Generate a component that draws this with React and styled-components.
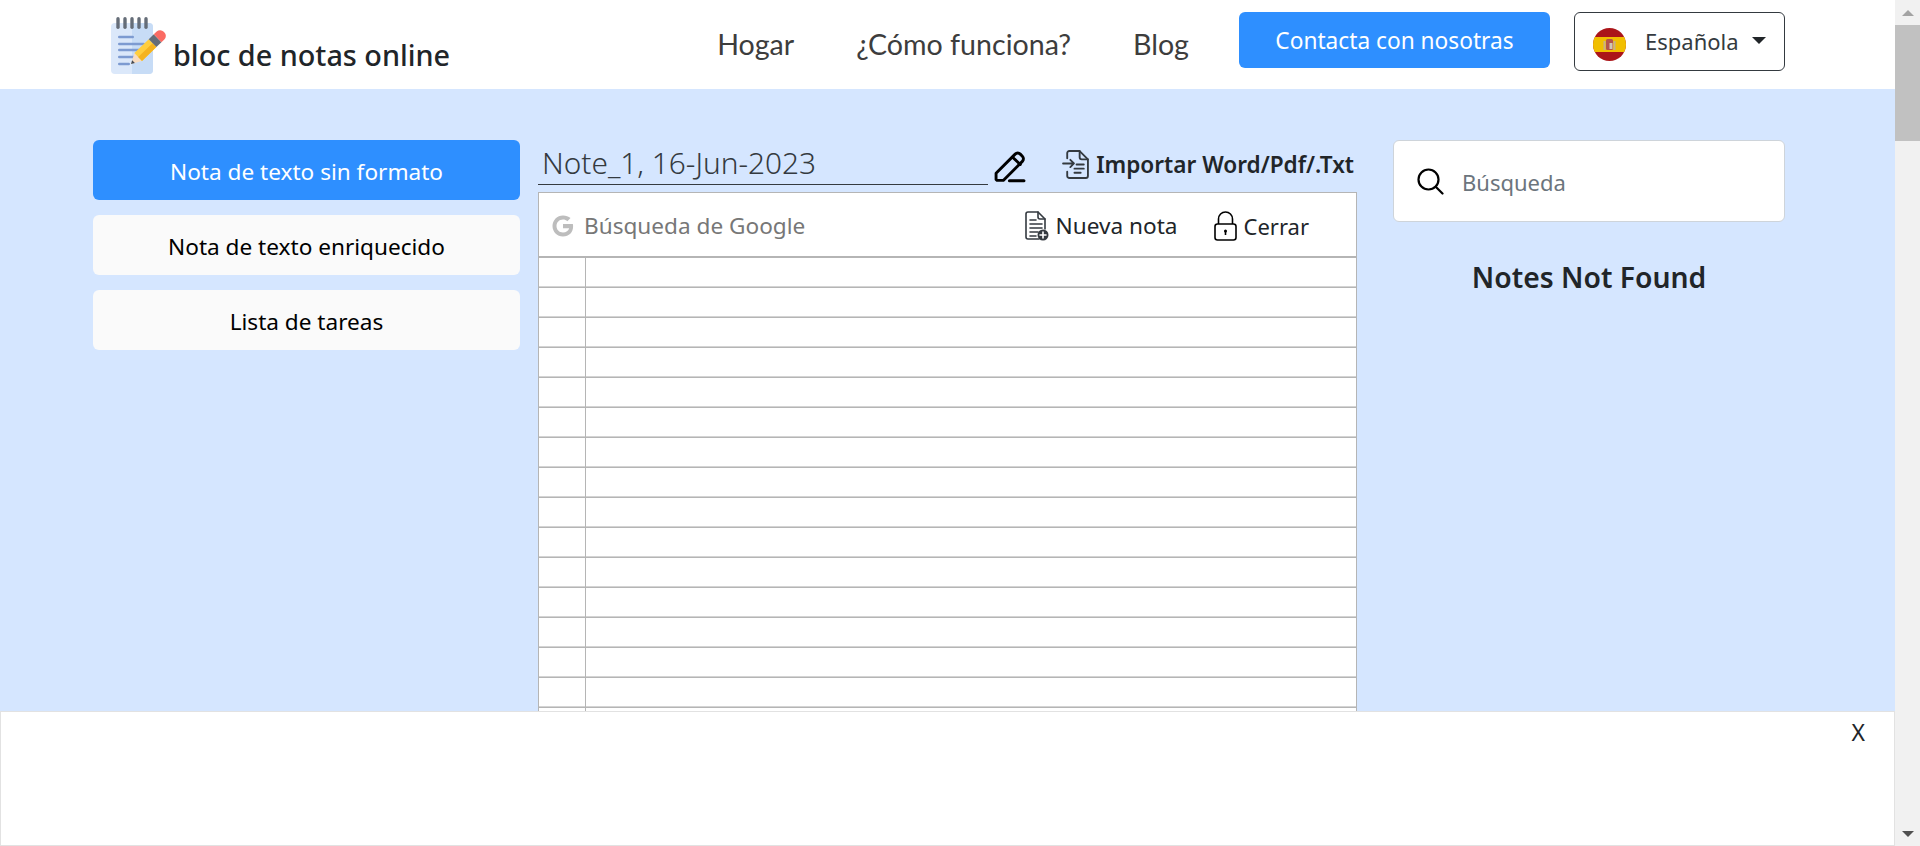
import styled, { createGlobalStyle } from "styled-components";

const GlobalStyle = createGlobalStyle`
  html, body {
    margin: 0;
    height: 100%;
    overflow: hidden;
  }
  body {
    font-family: "Noto Sans", "Open Sans", sans-serif;
    color: #212529;
    background: #d5e6ff;
  }
  * { box-sizing: border-box; }
`;

const Shell = styled.div`
  display: flex;
  height: 100vh;
`;

const Main = styled.div`
  flex: 1;
  min-width: 0;
  position: relative;
  overflow: hidden;
  display: flex;
  flex-direction: column;
`;

const Header = styled.header`
  height: 89px;
  flex: none;
  background: #fff;
  display: flex;
  padding: 12px 110px 0 111px;
`;

const Brand = styled.a`
  display: flex;
  align-items: flex-end;
  height: 61px;
  font-size: 28.8px;
  font-weight: 500;
  line-height: 36px;
  margin-top: 2px;
  white-space: nowrap;
  svg { margin: 0 7px 0 -1px; flex: none; }
  span { position: relative; top: -2px; }
`;

const Nav = styled.nav`
  margin-left: auto;
  display: flex;
  gap: 62px;
  height: 63px;
  align-items: center;
  margin-right: 50px;
`;

const NavLink = styled.a`
  font-family: "Lato", sans-serif;
  font-size: 28.6px;
  color: #3d3d3d;
  white-space: nowrap;
`;

const ContactButton = styled.button`
  width: 311px;
  height: 56px;
  border: 0;
  border-radius: 6px;
  background: #2e8fff;
  color: #fff;
  font: 400 22.7px "Noto Sans", sans-serif;
  margin-right: 24px;
`;

const LangButton = styled.button`
  width: 211px;
  height: 59px;
  border: 1px solid #343a40;
  border-radius: 6px;
  background: #fff;
  color: #343a40;
  font: 400 22px "Noto Sans", sans-serif;
  display: flex;
  align-items: center;
  padding: 0 18px 0 18px;
  svg { flex: none; margin-top: 6px; }
`;

const LangLabel = styled.span`
  margin-left: 19px;
  position: relative;
  top: -1px;
`;

const Caret = styled.i`
  margin-left: auto;
  width: 0;
  height: 0;
  border-left: 7px solid transparent;
  border-right: 7px solid transparent;
  border-top: 7px solid #212529;
  position: relative;
  top: -1px;
`;

const Workspace = styled.div`
  flex: 1;
  min-height: 0;
  padding: 51px 0 0 93px;
  display: grid;
  grid-template-columns: 427px 819px 410px;
  column-gap: 18px;
  align-items: start;
`;

const Tabs = styled.div`
  display: flex;
  flex-direction: column;
  gap: 15px;
`;

const Tab = styled.button`
  height: 60px;
  border: 0;
  border-radius: 6px;
  padding: 2px 0 0;
  background: ${(p) => (p.$active ? "#2e8fff" : "#fafafa")};
  color: ${(p) => (p.$active ? "#fff" : "#000")};
  font: 400 22.6px "Noto Sans", sans-serif;
`;

const Editor = styled.section`
  display: flex;
  flex-direction: column;
`;

const TitleRow = styled.div`
  height: 52px;
  display: flex;
  align-items: flex-start;
`;

const TitleInput = styled.div`
  width: 450px;
  height: 45px;
  border-bottom: 1px solid #343a40;
  padding-left: 4px;
  font-size: 29.8px;
  font-weight: 300;
  line-height: 45px;
  color: #343a40;
`;

const PencilWrap = styled.span`
  margin: 10px 0 0 6px;
  display: block;
  height: 33px;
`;

const ImportLink = styled.a`
  margin-left: auto;
  margin-right: 3px;
  display: flex;
  align-items: center;
  gap: 7px;
  height: 48px;
  font-size: 22.6px;
  font-weight: 600;
  white-space: nowrap;
  svg { flex: none; }
`;

const Panel = styled.div`
  height: 600px;
  background: #fff;
  border: 1px solid #b5b5b5;
  display: flex;
  flex-direction: column;
`;

const PanelBar = styled.div`
  height: 65px;
  flex: none;
  border-bottom: 2px solid #b5b5b5;
  display: flex;
  align-items: center;
  padding: 2px 47px 0 12px;
`;

const GoogleSearch = styled.div`
  display: flex;
  align-items: center;
  gap: 9px;
  font-size: 22.6px;
  color: #777;
  margin-right: auto;
`;

const BarAction = styled.a`
  display: flex;
  align-items: center;
  gap: 7px;
  font-size: ${(p) => p.$size || 22.6}px;
  color: #212529;
  margin-left: ${(p) => p.$gap || 0}px;
  svg { flex: none; }
`;

const NoteLines = styled.div`
  flex: 1;
  background-image:
    linear-gradient(to right, transparent 46px, #b5b5b5 46px, #b5b5b5 47px, transparent 47px),
    linear-gradient(to bottom, transparent 28px, #d4d4d4 28px, #d4d4d4 29px, #b5b5b5 29px, #b5b5b5 30px);
  background-size: 100% 100%, 100% 30px;
`;

const SearchSide = styled.aside`
  margin-left: 18px;
  display: flex;
  flex-direction: column;
`;

const SearchBox = styled.div`
  height: 82px;
  background: #fff;
  border: 1px solid #ced4da;
  border-radius: 6px;
  display: flex;
  align-items: center;
  padding: 0 0 0 22px;
  gap: 18px;
  font-size: 22px;
  color: #6c757d;
`;

const SearchHint = styled.span`
  margin-top: 2px;
`;

const NotFound = styled.h5`
  margin: 33px 0 0;
  text-align: center;
  font-size: 28.3px;
  font-weight: 600;
  line-height: 44px;
`;

const AdBar = styled.div`
  position: absolute;
  left: 0;
  right: 0;
  bottom: 0;
  height: 135px;
  background: #fff;
  border: 1px solid #e2e2e2;
`;

const AdClose = styled.span`
  position: absolute;
  top: 4px;
  right: 29px;
  font-size: 23px;
  color: #212529;
`;

const ScrollTrack = styled.div`
  width: 25px;
  flex: none;
  background: #f1f1f1;
  display: flex;
  flex-direction: column;
`;

const ScrollBtn = styled.div`
  height: 25px;
  flex: none;
  display: flex;
  align-items: center;
  justify-content: center;
  margin-top: ${(p) => (p.$end ? "auto" : "0")};
  &::after {
    content: "";
    width: 0;
    height: 0;
    border-left: 6px solid transparent;
    border-right: 6px solid transparent;
    ${(p) => (p.$end ? "border-top: 6px solid #505050;" : "border-bottom: 6px solid #a3a3a3;")}
  }
`;

const ScrollThumb = styled.div`
  height: 116px;
  flex: none;
  background: #c1c1c1;
`;

const LogoIcon = () => (
  <svg width="56" height="60" viewBox="0 0 56 60">
    <rect x="1" y="8" width="42" height="51" rx="4" fill="#dbe8fa" />
    <path d="M22 8h17a4 4 0 0 1 4 4v43a4 4 0 0 1-4 4H22z" fill="#c7dcf6" />
    {[8, 15, 22, 29, 36].map((x) => (
      <rect key={x} x={x - 1.7} y="2" width="3.4" height="12" rx="1.7" fill="#656d78" />
    ))}
    {[[22, 24], [29, 35], [35, 32], [42, 25], [49, 20]].map(([y, x2]) => (
      <rect key={y} x="8" y={y - 1.3} width={x2 - 8} height="2.6" rx="1.2" fill="#7d9bd1" />
    ))}
    <g transform="translate(21 49) rotate(-44)">
      <path d="M0 0 L10 -5.5 V5.5z" fill="#f8dcc0" />
      <path d="M0 0 L3.5 -2 V2z" fill="#434a54" />
      <rect x="10" y="-5.5" width="20" height="11" fill="#ffce3e" />
      <rect x="10" y="0" width="20" height="5.5" fill="#f5b31f" />
      <rect x="30" y="-5.5" width="7" height="11" fill="#656d78" />
      <path d="M37 -5.5h4a5 5 0 0 1 5 5v1a5 5 0 0 1-5 5h-4z" fill="#fb6b63" />
    </g>
  </svg>
);

const FlagIcon = () => (
  <svg width="33" height="33" viewBox="0 0 33 33">
    <clipPath id="flagClip"><circle cx="16.5" cy="16.5" r="16.5" /></clipPath>
    <g clipPath="url(#flagClip)">
      <rect width="33" height="33" fill="#ab1519" />
      <rect y="9" width="33" height="15" fill="#f1bf00" />
      <rect x="10.5" y="13" width="2" height="9" fill="#c8b08a" />
      <rect x="13" y="11" width="7" height="11" rx="1.5" fill="#b5534a" />
      <rect x="16.5" y="15" width="3" height="6" fill="#cfc7b5" />
      <rect x="20.5" y="13" width="2" height="9" fill="#c8b08a" />
    </g>
  </svg>
);

const PencilIcon = () => (
  <svg width="33" height="33" viewBox="0 0 32 32" fill="none" stroke="#000" strokeWidth="2.800" strokeLinecap="round" strokeLinejoin="round">
    <path d="M2 28.500v-6L20.500 4a3.500 3.500 0 0 1 5 0l2 2a3.500 3.500 0 0 1 0 5L9 29.500H3z" />
    <path d="M18 7l7.500 7" />
    <path d="M15 29.800h14" strokeWidth="3" />
  </svg>
);

const ImportIcon = () => (
  <svg width="27" height="29" viewBox="0 0 26 28" fill="none" stroke="#343a40" strokeWidth="1.800" strokeLinecap="round" strokeLinejoin="round">
    <path d="M5 8V3a2 2 0 0 1 2-2h10l8 8v16a2 2 0 0 1-2 2H7a2 2 0 0 1-2-2v-4" />
    <path d="M17 1v6a2 2 0 0 0 2 2h6" />
    <path d="M1 13h10M8 9.500l3.500 3.500L8 16.500" />
    <path d="M14 14h7M12 18h9M12 22h6" />
  </svg>
);

const NewNoteIcon = () => (
  <svg width="24" height="30" viewBox="0 0 24 30" fill="none" stroke="#343a40" strokeWidth="1.600" strokeLinecap="round" strokeLinejoin="round">
    <path d="M14 28H3a2 2 0 0 1-2-2V3a2 2 0 0 1 2-2h10l7 7v10" />
    <path d="M13 1v5a2 2 0 0 0 2 2h5" />
    <path d="M5 9h6M5 13h12M5 17h12M5 21h8M5 25h6" />
    <circle cx="18" cy="24" r="5.500" fill="#343a40" stroke="none" />
    <path d="M18 21v6M15 24h6" stroke="#fff" strokeWidth="1.600" />
  </svg>
);

const LockIcon = () => (
  <svg width="23" height="30" viewBox="0 0 23 30" fill="none" stroke="#000" strokeWidth="1.600">
    <rect x="1" y="13" width="21" height="16" rx="2.500" />
    <path d="M4.500 13V8a7 7 0 0 1 14 0v5" />
    <circle cx="11.500" cy="20" r="1.500" fill="#000" stroke="none" />
    <path d="M11.500 20v4" strokeWidth="1.600" />
  </svg>
);

const GoogleIcon = () => (
  <svg width="24" height="24" viewBox="0 0 48 48">
    <path fill="#bdbdbd" d="M24 20v8.500h12.400c-1.400 5-6 8.500-12.400 8.500-7.700 0-13-5.800-13-13s5.300-13 13-13c3.400 0 6.400 1.200 8.800 3.400l6.200-6.200C35.100 4.900 30 2.900 24 2.900 12.300 2.900 3 12.300 3 24s9.300 21.100 21 21.100c12.100 0 20.200-8.500 20.200-20.500 0-1.600-.2-3.200-.5-4.600z" />
  </svg>
);

const SearchIcon = () => (
  <svg width="28" height="28" viewBox="0 0 28 28" fill="none" stroke="#000" strokeWidth="2.200" strokeLinecap="round">
    <circle cx="12.500" cy="12.500" r="10" />
    <path d="M20 20l6.500 6.500" />
  </svg>
);

export default function App() {
  return (
    <Shell>
      <GlobalStyle />
      <Main>
        <Header>
          <Brand>
            <LogoIcon />
            <span>bloc de notas online</span>
          </Brand>
          <Nav>
            <NavLink>Hogar</NavLink>
            <NavLink>¿Cómo funciona?</NavLink>
            <NavLink>Blog</NavLink>
          </Nav>
          <ContactButton>Contacta con nosotras</ContactButton>
          <LangButton>
            <FlagIcon />
            <LangLabel>Española</LangLabel>
            <Caret />
          </LangButton>
        </Header>
        <Workspace>
          <Tabs>
            <Tab $active>Nota de texto sin formato</Tab>
            <Tab>Nota de texto enriquecido</Tab>
            <Tab>Lista de tareas</Tab>
          </Tabs>
          <Editor>
            <TitleRow>
              <TitleInput>Note_1, 16-Jun-2023</TitleInput>
              <PencilWrap><PencilIcon /></PencilWrap>
              <ImportLink><ImportIcon />Importar Word/Pdf/.Txt</ImportLink>
            </TitleRow>
            <Panel>
              <PanelBar>
                <GoogleSearch><GoogleIcon />Búsqueda de Google</GoogleSearch>
                <BarAction><NewNoteIcon />Nueva nota</BarAction>
                <BarAction $gap={36} $size={22}><LockIcon />Cerrar</BarAction>
              </PanelBar>
              <NoteLines />
            </Panel>
          </Editor>
          <SearchSide>
            <SearchBox><SearchIcon /><SearchHint>Búsqueda</SearchHint></SearchBox>
            <NotFound>Notes Not Found</NotFound>
          </SearchSide>
        </Workspace>
        <AdBar><AdClose>X</AdClose></AdBar>
      </Main>
      <ScrollTrack>
        <ScrollBtn />
        <ScrollThumb />
        <ScrollBtn $end />
      </ScrollTrack>
    </Shell>
  );
}
